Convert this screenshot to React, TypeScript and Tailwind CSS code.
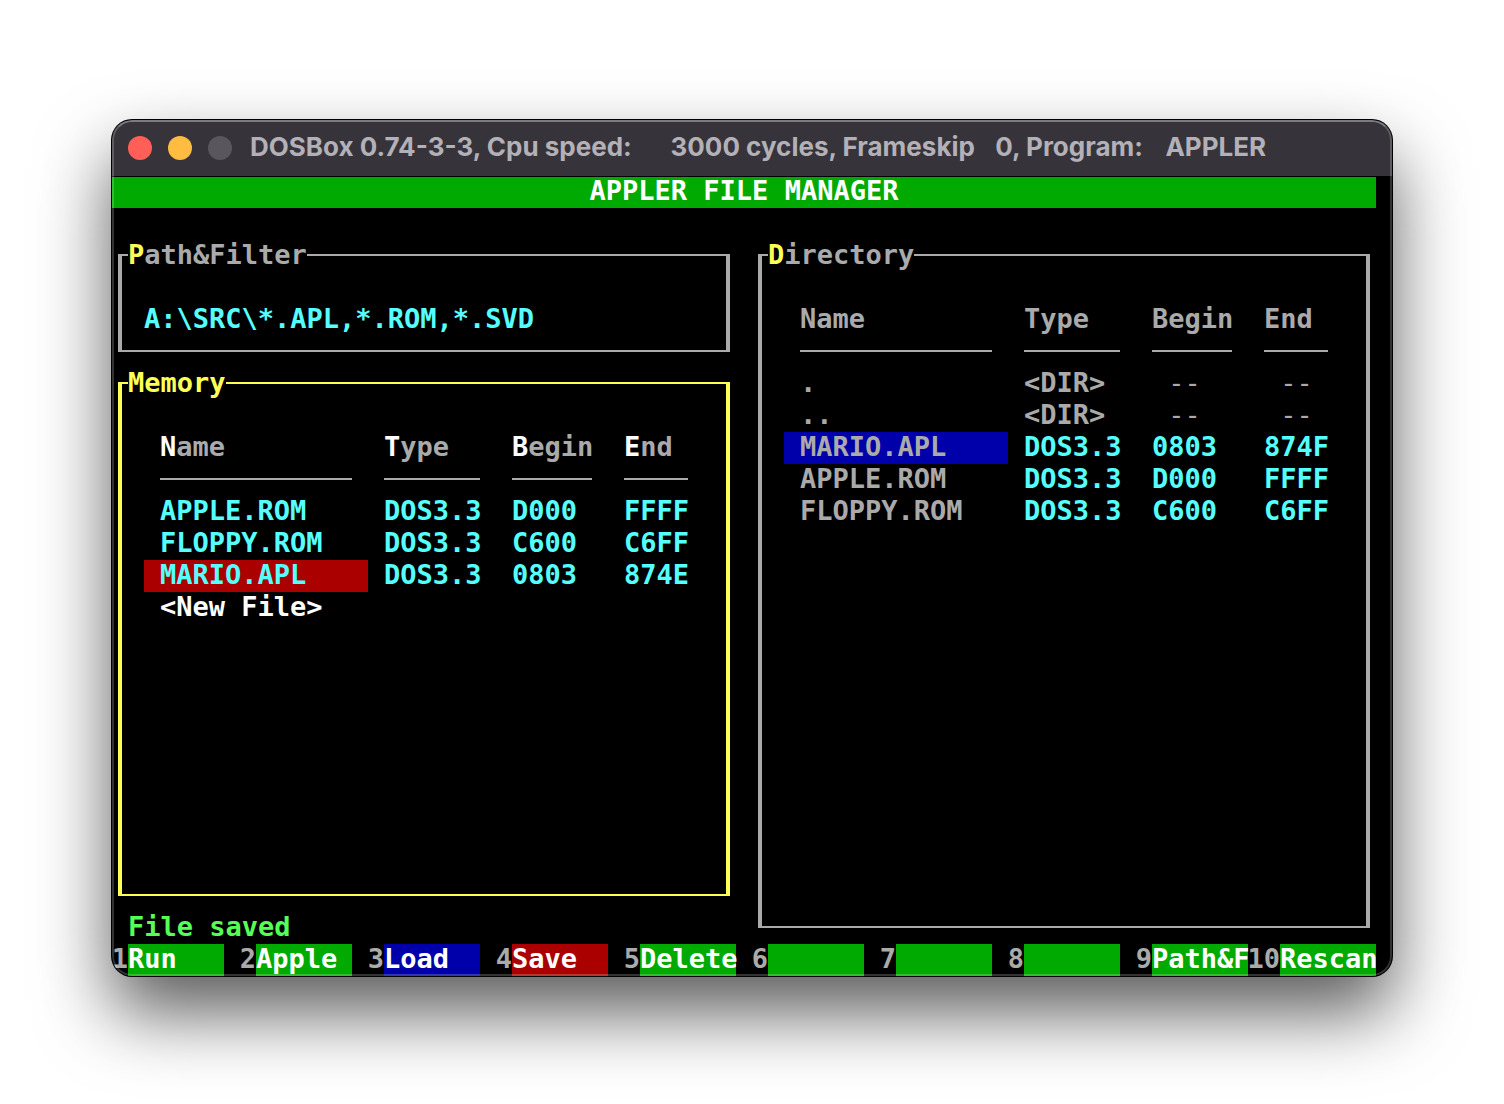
import React, { useState } from "react";
import type { ReactNode } from "react";

type FileRow = {
  name: string;
  type?: string;
  begin?: string;
  end?: string;
  nameClass: string;
  dataClass: string;
};

const cyan = "text-[#55ffff]";
const gray = "text-[#aaaaaa]";

const memoryRows: FileRow[] = [
  { name: "APPLE.ROM", type: "DOS3.3", begin: "D000", end: "FFFF", nameClass: cyan, dataClass: cyan },
  { name: "FLOPPY.ROM", type: "DOS3.3", begin: "C600", end: "C6FF", nameClass: cyan, dataClass: cyan },
  { name: "MARIO.APL", type: "DOS3.3", begin: "0803", end: "874E", nameClass: "bg-[#aa0000] text-[#55ffff]", dataClass: cyan },
  { name: "<New File>", nameClass: "text-white", dataClass: gray },
];

const directoryRows: FileRow[] = [
  { name: ".", type: "<DIR>", begin: " --", end: " --", nameClass: gray, dataClass: "text-[#aaaaaa] font-normal" },
  { name: "..", type: "<DIR>", begin: " --", end: " --", nameClass: gray, dataClass: "text-[#aaaaaa] font-normal" },
  { name: "MARIO.APL", type: "DOS3.3", begin: "0803", end: "874F", nameClass: "bg-[#0000aa] text-[#aaaaaa]", dataClass: cyan },
  { name: "APPLE.ROM", type: "DOS3.3", begin: "D000", end: "FFFF", nameClass: gray, dataClass: cyan },
  { name: "FLOPPY.ROM", type: "DOS3.3", begin: "C600", end: "C6FF", nameClass: gray, dataClass: cyan },
];

const functionKeys = [
  { key: 1, label: "Run", color: "bg-[#00aa00]" },
  { key: 2, label: "Apple", color: "bg-[#00aa00]" },
  { key: 3, label: "Load", color: "bg-[#0000aa]" },
  { key: 4, label: "Save", color: "bg-[#aa0000]" },
  { key: 5, label: "Delete", color: "bg-[#00aa00]" },
  { key: 6, label: "", color: "bg-[#00aa00]" },
  { key: 7, label: "", color: "bg-[#00aa00]" },
  { key: 8, label: "", color: "bg-[#00aa00]" },
  { key: 9, label: "Path&F", color: "bg-[#00aa00]" },
  { key: 10, label: "Rescan", color: "bg-[#00aa00]" },
];

const columns = [
  { title: "Name", width: "w-56" },
  { title: "Type", width: "w-32" },
  { title: "Begin", width: "w-28" },
  { title: "End", width: "" },
];

function Panel({
  title,
  active = false,
  className = "",
  children,
}: {
  title: string;
  active?: boolean;
  className?: string;
  children: ReactNode;
}) {
  return (
    <fieldset
      className={`min-w-0 border-x-4 border-y-2 ${
        active ? "border-[#ffff55] text-[#ffff55]" : "border-[#aaaaaa] text-[#aaaaaa]"
      } ${className}`}
    >
      <legend className="ml-1.5 leading-8">
        <span className="text-[#ffff55]">{title[0]}</span>
        {title.slice(1)}
      </legend>
      <div className="px-[22px] pt-[33px] pb-3.5">{children}</div>
    </fieldset>
  );
}

function FileTable({ label, rows, hotkeys = false }: { label: string; rows: FileRow[]; hotkeys?: boolean }) {
  return (
    <table aria-label={label} className="w-full table-fixed border-collapse text-left leading-[30px] whitespace-pre">
      <thead className="text-[#aaaaaa]">
        <tr>
          {columns.map((c) => (
            <th key={c.title} scope="col" className={`${c.width} p-0 pl-4 align-top`}>
              <div className="h-8">
                <span className={hotkeys ? "text-white" : ""}>{c.title[0]}</span>
                {c.title.slice(1)}
              </div>
              <div className="mr-4 h-8 pt-3.5">
                <div className="h-0.5 bg-[#aaaaaa]" />
              </div>
            </th>
          ))}
        </tr>
      </thead>
      <tbody>
        {rows.map((r) => (
          <tr key={r.name} className="h-8">
            <td className={`p-0 pl-4 align-top ${r.nameClass}`}>{r.name}</td>
            <td className={`p-0 pl-4 align-top font-bold ${r.type === "<DIR>" ? gray : r.dataClass}`}>{r.type}</td>
            <td className={`p-0 pl-4 align-top ${r.dataClass}`}>{r.begin}</td>
            <td className={`p-0 pl-4 align-top ${r.dataClass}`}>{r.end}</td>
          </tr>
        ))}
      </tbody>
    </table>
  );
}

function TitleBar() {
  return (
    <header className="flex h-14 items-center bg-[#36343a] pl-4">
      <div className="flex gap-4">
        <button aria-label="Close" className="size-6 rounded-full bg-[#ff5f57]" />
        <button aria-label="Minimize" className="size-6 rounded-full bg-[#febc40]" />
        <button aria-label="Zoom" disabled className="size-6 rounded-full bg-[#59575d]" />
      </div>
      <h1 className="mb-0.5 ml-[18px] font-['Inter',sans-serif] text-[26px] leading-8 font-bold whitespace-pre text-[#b3b1b7]">
        {"DOSBox 0.74-3-3, Cpu speed:     "}
        <span className="ml-2">{"3000 cycles, Frameskip  "}</span>
        <span className="ml-2">{"0, Program:   "}</span>
        <span className="ml-1">APPLER</span>
      </h1>
    </header>
  );
}

export default function App() {
  const [path, setPath] = useState("A:\\SRC\\*.APL,*.ROM,*.SVD");

  return (
    <div className="flex min-h-screen flex-col bg-white px-28 pt-[120px] pb-32">
      <main className="relative flex flex-1 flex-col overflow-hidden rounded-[20px] bg-black shadow-[0_0_0_1px_#000,0_36px_72px_rgba(0,0,0,0.65)]">
        <TitleBar />
        <div className="flex flex-1 flex-col font-['DejaVu_Sans_Mono',monospace] text-[27px] leading-[30px] font-bold">
          <h2 className="mr-4 h-8 border-t border-black bg-[#00aa00] text-center leading-7 text-white">
            APPLER FILE MANAGER
          </h2>

          <div className="grid flex-1 grid-cols-2 gap-7 pt-[31px] pr-[22px] pl-1.5">
            <div className="flex min-w-0 flex-col">
              <Panel title="Path&Filter">
                <input
                  aria-label="Path and filter"
                  value={path}
                  onChange={(e) => setPath(e.target.value)}
                  spellCheck={false}
                  className="block h-8 w-full bg-transparent pb-1 text-[#55ffff] outline-none"
                />
              </Panel>
              <Panel title="Memory" active className="mt-[15px] flex-1">
                <FileTable label="Memory" rows={memoryRows} hotkeys />
              </Panel>
              <p role="status" className="mt-4 h-8 pl-2.5 text-[#55ff55]">
                File saved
              </p>
            </div>
            <Panel title="Directory" className="mb-4">
              <FileTable label="Directory" rows={directoryRows} />
            </Panel>
          </div>

          <nav aria-label="Function keys" className="mr-4 flex">
            {functionKeys.map(({ key, label, color }) => (
              <div key={key} className={`flex h-8 min-w-0 ${key === 1 ? "flex-[7]" : "flex-[8]"}`}>
                <span className={`flex shrink-0 justify-end text-[#aaaaaa] ${key === 1 ? "w-4" : "w-8"}`}>{key}</span>
                <button
                  aria-label={label || `F${key}`}
                  className={`flex min-w-0 flex-1 items-start text-left whitespace-nowrap text-white ${color}`}
                >
                  {label}
                </button>
              </div>
            ))}
          </nav>
        </div>
        <div className="pointer-events-none absolute inset-0 rounded-[20px] border-2 border-white/20 border-t-white/35" />
      </main>
    </div>
  );
}
